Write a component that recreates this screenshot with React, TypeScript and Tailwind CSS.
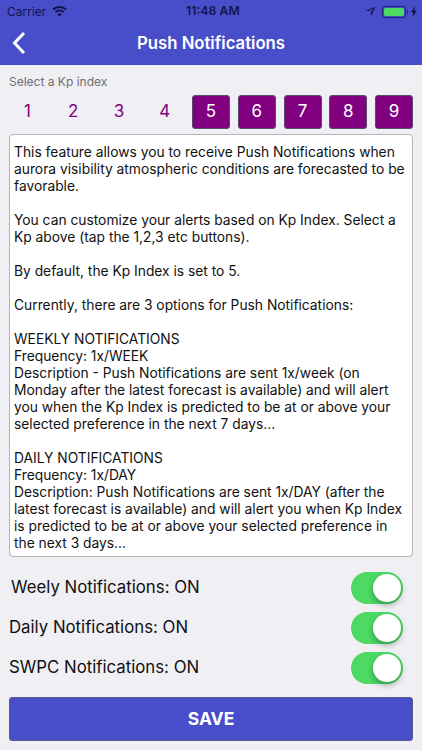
import React from 'react';

const KP = [1, 2, 3, 4, 5, 6, 7, 8, 9];

const TOGGLES = [
  { label: 'Weely Notifications: ON', indent: 'pl-[2px]' },
  { label: 'Daily Notifications: ON', indent: '' },
  { label: 'SWPC Notifications: ON', indent: '' },
];

function StatusBar() {
  return (
    <div className="relative flex h-[22px] items-center justify-between pl-[7px] pr-[5px] pt-[1px] text-[#14144a]">
      <div className="flex items-center gap-[6px] text-[12px] leading-none">
        <span>Carrier</span>
        <svg width="15" height="11" viewBox="0 0 15 11" fill="currentColor">
          <path d="M7.5 0C4.7 0 2.2 1.1.4 2.9l1.3 1.4C3.2 2.8 5.2 1.9 7.5 1.9s4.3.9 5.8 2.4l1.3-1.4C12.8 1.1 10.3 0 7.5 0z" />
          <path d="M7.5 3.6c-1.8 0-3.4.7-4.6 1.9l1.3 1.4c.9-.8 2-1.4 3.3-1.4s2.4.6 3.3 1.4l1.3-1.4c-1.2-1.2-2.8-1.9-4.6-1.9z" />
          <path d="M7.5 7.2c-.9 0-1.6.3-2.2.9l2.2 2.6 2.2-2.6c-.6-.6-1.3-.9-2.2-.9z" />
        </svg>
      </div>
      <span className="absolute left-[186px] top-[3px] text-[12.3px] font-semibold leading-[15px]">11:48 AM</span>
      <div className="flex items-center">
        <svg width="11" height="11" viewBox="0 0 11 11" fill="currentColor" className="mr-[6px]">
          <path d="M10.5.5L.5 5h4.8l.9 5.2L10.5.5zM8 3 5.7 7 5.3 4 3.6 3.9 8 3z" />
        </svg>
        <div className="flex h-[12px] w-[24px] items-center rounded-[3px] border border-[#23236a] p-[1px]">
          <div className="h-full w-full rounded-[1.5px] bg-[#4cd964]" />
        </div>
        <div className="ml-[1px] mr-[3px] h-[4px] w-[1px] bg-[#23236a]" />
        <svg width="6" height="11" viewBox="0 0 6 11" fill="currentColor">
          <path d="M3.8 0 0 6.2h2.3L1.6 11 6 4.5H3.4L3.8 0z" />
        </svg>
      </div>
    </div>
  );
}

function Toggle() {
  return (
    <div className="flex h-[32px] w-[52px] items-center justify-end rounded-full bg-[#4cd964] pr-[2px]">
      <div className="h-[28px] w-[28px] rounded-full bg-white shadow-[0_3px_6px_rgba(0,0,0,0.3)]" />
    </div>
  );
}

export default function App() {
  return (
    <div className="flex h-[750px] w-[422px] flex-col overflow-hidden bg-[#efeff4] font-['Inter',sans-serif]">
      {/* Header */}
      <div className="h-[65px] bg-[#484eca]">
        <StatusBar />
        <div className="relative flex h-[42px] items-center justify-center">
          <svg width="14" height="24" viewBox="0 0 14 24" fill="none" stroke="white" strokeWidth="3" className="absolute left-[12px] top-[9px]">
            <path d="M12 2 2.5 12 12 22" />
          </svg>
          <span className="text-[16.7px] font-semibold leading-none text-white">Push Notifications</span>
        </div>
      </div>

      <div className="flex flex-1 flex-col px-[9px]">
        <div className="pt-[9px] text-[12px] leading-[15px] text-[#6e6e73]">Select a Kp index</div>

        {/* Kp buttons */}
        <div className="mt-[6px] flex justify-between">
          {KP.map((n) =>
            n >= 5 ? (
              <div key={n} className="flex h-[34px] w-[38px] items-center justify-center rounded-[3px] border border-[#5a4a6a] bg-[#800080] text-[17px] text-white">
                {n}
              </div>
            ) : (
              <div key={n} className="flex h-[34px] w-[38px] items-center justify-center pr-[1px] text-[17px] text-[#800080]">
                {n}
              </div>
            ),
          )}
        </div>

        {/* Description */}
        <div className="mt-[5px] h-[423px] overflow-hidden rounded-[4px] border border-[#b4b4b8] bg-white pl-[4px] pr-[3px] pt-[9px] text-[13.8px] leading-[17px] text-[#111]">
          <p>This feature allows you to receive Push Notifications when aurora visibility atmospheric conditions are forecasted to be favorable.</p>
          <p className="mt-[17px]">You can customize your alerts based on Kp Index. Select a Kp above (tap the 1,2,3 etc buttons).</p>
          <p className="mt-[17px]">By default, the Kp Index is set to 5.</p>
          <p className="mt-[17px]">Currently, there are 3 options for Push Notifications:</p>
          <p className="mt-[17px]">WEEKLY NOTIFICATIONS<br />Frequency: 1x/WEEK<br />Description - Push Notifications are sent 1x/week (on<br />Monday after the latest forecast is available) and will alert you when the Kp Index is predicted to be at or above your selected preference in the next 7 days...</p>
          <p className="mt-[17px]">DAILY NOTIFICATIONS<br />Frequency: 1x/DAY<br />Description: Push Notifications are sent 1x/DAY (after the<br />latest forecast is available) and will alert you when Kp Index<br />is predicted to be at or above your selected preference in<br />the next 3 days...</p>
        </div>

        {/* Toggles */}
        <div className="mt-[15px] flex flex-col gap-[8px] pr-[10px]">
          {TOGGLES.map((t) => (
            <div key={t.label} className="flex items-center justify-between">
              <span className={`pb-[2px] text-[16.8px] leading-none text-[#111] ${t.indent}`}>{t.label}</span>
              <Toggle />
            </div>
          ))}
        </div>

        <div className="mt-[13px] flex h-[44px] items-center justify-center rounded-[3px] border border-[#5a5a8a] bg-[#484eca] text-[17.5px] font-bold text-white">
          SAVE
        </div>
      </div>
    </div>
  );
}
